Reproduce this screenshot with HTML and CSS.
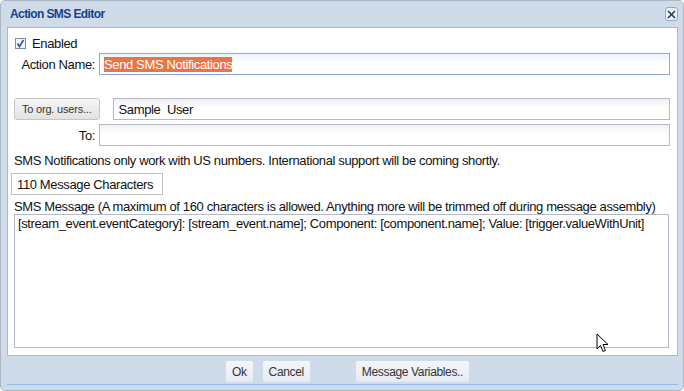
FILE: index.html
```html
<!DOCTYPE html>
<html lang="en">
<head>
    <meta charset="UTF-8">
    <title>Action SMS Editor</title>
    <link rel="stylesheet" href="styles.css">
</head>
<body>
    <div class="window">
        <div class="titlebar">
            <span class="title">Action SMS Editor</span>
            <span class="close">
                <svg width="9" height="9" viewBox="0 0 9 9"><path d="M1 1L8 8M8 1L1 8" stroke="#1f3c66" stroke-width="1.6"/></svg>
            </span>
        </div>

        <div class="panel">
            <div class="check-row">
                <span class="checkbox">
                    <svg width="9" height="9" viewBox="0 0 9 9"><path d="M1.5 4.5L3.5 7.5L7.5 1" fill="none" stroke="#3a5f9c" stroke-width="1.8"/></svg>
                </span>
                <span>Enabled</span>
            </div>

            <div class="field-row name-row">
                <label class="field-label">Action Name:</label>
                <div class="field focused"><span class="selected">Send SMS Notifications</span></div>
            </div>

            <div class="field-row users-row">
                <button class="btn">To org. users...</button>
                <div class="field users">Sample&nbsp; User</div>
            </div>

            <div class="field-row to-row">
                <label class="field-label">To:</label>
                <div class="field"></div>
            </div>

            <p class="note">SMS Notifications only work with US numbers. International support will be coming shortly.</p>

            <div class="counter">110 Message Characters</div>

            <p class="note msg-label">SMS Message (A maximum of 160 characters is allowed. Anything more will be trimmed off during message assembly)</p>
            <div class="message">[stream_event.eventCategory]: [stream_event.name]; Component: [component.name]; Value: [trigger.valueWithUnit]</div>
        </div>

        <div class="footer">
            <button class="btn flat">Ok</button>
            <button class="btn flat">Cancel</button>
            <button class="btn flat vars">Message Variables..</button>
        </div>

        <svg class="cursor" width="13" height="20" viewBox="0 0 13 20">
            <path d="M1 1L1 16L4.5 12.5L7 18.5L9.5 17.5L7 11.5L12 11.5Z" fill="#fff" stroke="#000" stroke-width="1"/>
        </svg>
    </div>
</body>
</html>
```

FILE: styles.css
```css
html, body {
    margin: 0;
    padding: 0;
    background: #ffffff;
}
body {
    font-family: 'Liberation Sans', Arial, sans-serif;
    font-size: 13px;
    letter-spacing: -0.37px;
    color: #111;
}
.window {
    position: relative;
    box-sizing: border-box;
    width: 684px;
    height: 391px;
    background: #cfdbe8;
    border: 1px solid #a9b6c4;
    border-radius: 5px;
    padding: 0 5px 5px 6px;
    display: flex;
    flex-direction: column;
}
.titlebar {
    height: 26px;
    display: flex;
    align-items: center;
    justify-content: space-between;
}
.title {
    font-weight: bold;
    font-size: 12px;
    letter-spacing: -0.6px;
    color: #15428b;
    padding-left: 3px;
}
.close {
    width: 13px;
    height: 14px;
    box-sizing: border-box;
    border: 1px solid #8fa9c8;
    border-radius: 3px;
    background: #eef3f9;
    display: flex;
    align-items: center;
    justify-content: center;
}
.panel {
    background: #ffffff;
    border: 1px solid #99bbe8;
    height: 329px;
    box-sizing: border-box;
    padding: 8px 7px 0 6px;
}
.check-row {
    display: flex;
    align-items: center;
    gap: 6px;
    height: 14px;
    padding-left: 1px;
}
.checkbox {
    width: 9px;
    height: 9px;
    border: 1px solid #7a8ea8;
    background: #f2f5fa;
    display: flex;
}
.field-row {
    display: flex;
    align-items: center;
}
.field-label {
    width: 85px;
    text-align: right;
    padding-right: 4px;
    box-sizing: border-box;
}
.field {
    flex: 1;
    height: 22px;
    box-sizing: border-box;
    border: 1px solid #b5b8c8;
    background: linear-gradient(#f0f0f0, #ffffff 45%);
    padding: 2px 4px 0;
    line-height: 17px;
    white-space: nowrap;
}
.field.focused {
    border-color: #8eaad3;
    background: linear-gradient(#eaf3fb, #ffffff 45%);
}
.selected {
    background: #ea7446;
    color: #ffffff;
}
.name-row {
    margin-top: 3px;
}
.users-row {
    margin-top: 23px;
}
.users {
    margin-left: 13px;
    padding-left: 5px;
}
.to-row {
    margin-top: 4px;
}
.btn {
    font-family: 'Liberation Sans', Arial, sans-serif;
    font-size: 11px;
    letter-spacing: -0.2px;
    color: #333;
    height: 22px;
    padding: 0 7px;
    border: 1px solid #c4c4c4;
    border-radius: 3px;
    background: linear-gradient(#f6f6f6, #e2e2e2);
}
.note {
    margin: 7px 0 0;
    line-height: 15px;
    white-space: nowrap;
}
.counter {
    display: inline-block;
    margin-top: 5px;
    margin-left: -3px;
    height: 22px;
    box-sizing: border-box;
    border: 1px solid #c0c0c0;
    padding: 2px 5px 0 5px;
    line-height: 17px;
    width: 152px;
    white-space: nowrap;
}
.msg-label {
    margin-top: 4px;
}
.message {
    height: 134px;
    box-sizing: border-box;
    border: 1px solid #b5b8c8;
    padding: 1px 3px;
    line-height: 16px;
    white-space: nowrap;
    margin-right: 1px;
}
.footer {
    flex: 1;
    display: flex;
    justify-content: center;
    align-items: center;
    padding: 3px 0 0 10px;
    gap: 10px;
    border-bottom: 1px solid #99bbe8;
}
.btn.flat {
    font-size: 12px;
    letter-spacing: -0.35px;
    border: none;
    border-radius: 2px;
    background: linear-gradient(#f4f6f9, #e6ebf1);
    height: 21px;
    padding: 0 6px;
}
.btn.vars {
    margin-left: 36px;
}
.cursor {
    position: absolute;
    left: 595px;
    top: 332px;
}
```
